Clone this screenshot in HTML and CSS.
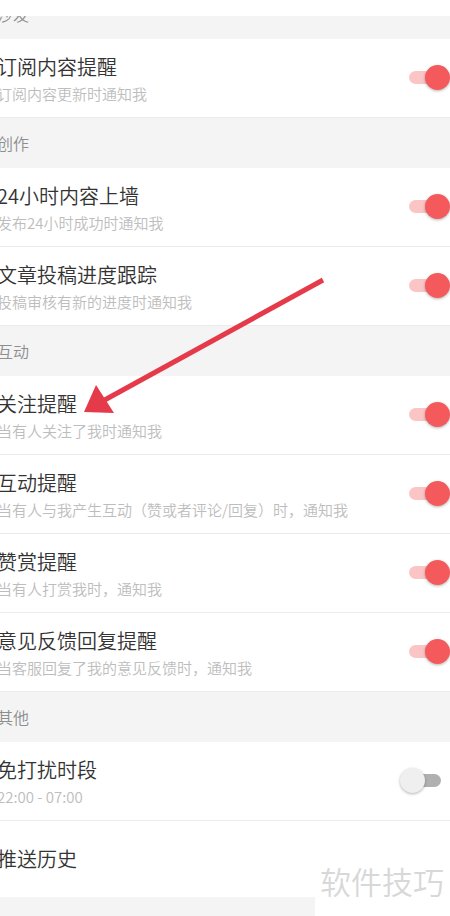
FILE: index.html
```html
<!DOCTYPE html>
<html lang="zh">
<head>
<meta charset="utf-8">
<title>推送设置</title>
<link rel="stylesheet" href="styles.css">
</head>
<body>
<div class="page">
  <div class="topbar"></div>
  <div class="section-head clipped"><span class="head-label">沙发</span></div>
  <div class="row">
    <div class="texts"><div class="title">订阅内容提醒</div><div class="sub">订阅内容更新时通知我</div></div>
    <div class="switch on"><span class="track"></span><span class="knob"></span></div>
  </div>

  <div class="section-head"><span class="head-label">创作</span></div>
  <div class="row">
    <div class="texts"><div class="title">24小时内容上墙</div><div class="sub">发布24小时成功时通知我</div></div>
    <div class="switch on"><span class="track"></span><span class="knob"></span></div>
  </div>
  <div class="row">
    <div class="texts"><div class="title">文章投稿进度跟踪</div><div class="sub">投稿审核有新的进度时通知我</div></div>
    <div class="switch on"><span class="track"></span><span class="knob"></span></div>
  </div>

  <div class="section-head"><span class="head-label">互动</span></div>
  <div class="row">
    <div class="texts"><div class="title">关注提醒</div><div class="sub">当有人关注了我时通知我</div></div>
    <div class="switch on"><span class="track"></span><span class="knob"></span></div>
  </div>
  <div class="row">
    <div class="texts"><div class="title">互动提醒</div><div class="sub">当有人与我产生互动（赞或者评论/回复）时，通知我</div></div>
    <div class="switch on"><span class="track"></span><span class="knob"></span></div>
  </div>
  <div class="row">
    <div class="texts"><div class="title">赞赏提醒</div><div class="sub">当有人打赏我时，通知我</div></div>
    <div class="switch on"><span class="track"></span><span class="knob"></span></div>
  </div>
  <div class="row">
    <div class="texts"><div class="title">意见反馈回复提醒</div><div class="sub">当客服回复了我的意见反馈时，通知我</div></div>
    <div class="switch on"><span class="track"></span><span class="knob"></span></div>
  </div>

  <div class="section-head"><span class="head-label">其他</span></div>
  <div class="row">
    <div class="texts"><div class="title">免打扰时段</div><div class="sub">22:00 - 07:00</div></div>
    <div class="switch off"><span class="track"></span><span class="knob"></span></div>
  </div>
  <div class="row last">
    <div class="texts"><div class="title">推送历史</div></div>
  </div>

  <svg class="arrow" width="450" height="916" viewBox="0 0 450 916" xmlns="http://www.w3.org/2000/svg">
    <line x1="323" y1="280" x2="101" y2="402" stroke="#e43a49" stroke-width="5"/>
    <polygon points="84,412 96,385 114,413" fill="#e43a49"/>
  </svg>

  <div class="watermark">软件技巧</div>
</div>
</body>
</html>
```

FILE: styles.css
```css
* { box-sizing: border-box; }
html, body {
  margin: 0;
  padding: 0;
}
body {
  background: #f4f4f4;
  font-family: "Noto Sans CJK SC", "Noto Sans", sans-serif;
}
.page {
  position: relative;
  width: 450px;
  height: 916px;
  overflow: hidden;
  background: #f4f4f4;
}
.topbar {
  height: 16px;
  background: #fff;
}
.section-head {
  height: 50px;
  display: flex;
  align-items: center;
  background: #f4f4f4;
  overflow: hidden;
}
.head-label {
  display: block;
  margin-left: -3px;
  font-size: 16px;
  font-weight: 350;
  line-height: 50px;
  color: #8e8e8e;
}
.section-head.clipped {
  height: 23px;
  align-items: flex-start;
}
.section-head.clipped .head-label {
  margin-top: -27px;
}
.row {
  height: 79px;
  background: #fff;
  display: flex;
  align-items: center;
  justify-content: space-between;
  border-bottom: 1px solid #ececec;
}
.row.last {
  height: 76px;
  border-bottom: none;
}
.texts {
  display: flex;
  flex-direction: column;
  gap: 3px;
  margin-left: -3px;
}
.title {
  font-size: 20px;
  font-weight: 350;
  line-height: 28px;
  color: #333;
}
.sub {
  font-size: 15px;
  font-weight: 350;
  line-height: 20px;
  color: #bdbdbd;
}
.switch {
  position: relative;
  width: 50px;
  height: 30px;
  flex: none;
  margin-top: -2px;
}
.track {
  position: absolute;
  left: 9px;
  top: 9px;
  width: 32px;
  height: 13px;
  border-radius: 7px;
}
.knob {
  position: absolute;
  top: 3px;
  width: 25px;
  height: 25px;
  border-radius: 50%;
  box-shadow: 0 1px 3px rgba(0,0,0,0.3);
}
.switch.on .track { background: #fbc5c6; }
.switch.on .knob { left: 25px; background: #f45a5c; }
.switch.off .track { background: #b0b0b0; }
.switch.off .knob { left: 0; background: #efefef; }
.arrow {
  position: absolute;
  left: 0;
  top: 0;
  pointer-events: none;
}
.watermark {
  position: absolute;
  right: 0;
  bottom: 0;
  width: 135px;
  height: 60px;
  background: #fff;
  color: #d8d8d8;
  font-size: 31px;
  font-weight: 350;
  line-height: 34px;
  padding: 8px 0 0 5px;
  white-space: nowrap;
}
```
